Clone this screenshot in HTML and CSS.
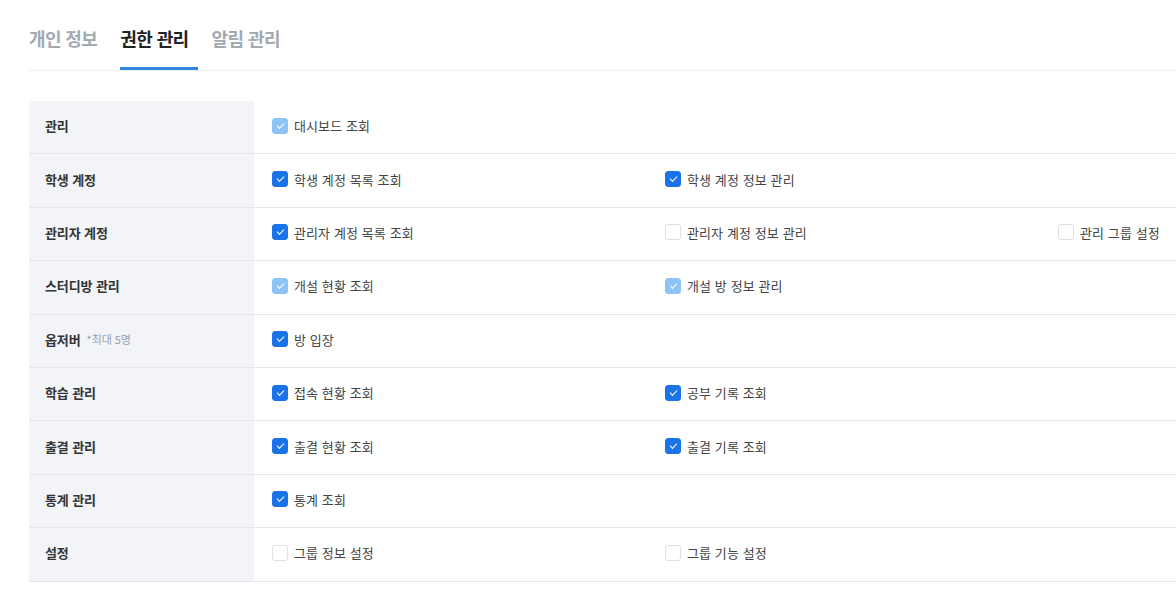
FILE: index.html
```html
<!DOCTYPE html>
<html lang="ko">
<head>
<meta charset="utf-8">
<link rel="stylesheet" href="styles.css">
</head>
<body>
<div class="page">
  <div class="tabs">
    <div class="tab">개인 정보</div>
    <div class="tab active">권한 관리</div>
    <div class="tab">알림 관리</div>
  </div>
  <div class="table">
    <div class="row">
      <div class="label">관리</div>
      <div class="opts">
        <div class="opt"><span class="cb on dis"></span>대시보드 조회</div>
      </div>
    </div>
    <div class="row">
      <div class="label">학생 계정</div>
      <div class="opts">
        <div class="opt"><span class="cb on"></span>학생 계정 목록 조회</div>
        <div class="opt"><span class="cb on"></span>학생 계정 정보 관리</div>
      </div>
    </div>
    <div class="row">
      <div class="label">관리자 계정</div>
      <div class="opts">
        <div class="opt"><span class="cb on"></span>관리자 계정 목록 조회</div>
        <div class="opt"><span class="cb"></span>관리자 계정 정보 관리</div>
        <div class="opt"><span class="cb"></span>관리 그룹 설정</div>
      </div>
    </div>
    <div class="row">
      <div class="label">스터디방 관리</div>
      <div class="opts">
        <div class="opt"><span class="cb on dis"></span>개설 현황 조회</div>
        <div class="opt"><span class="cb on dis"></span>개설 방 정보 관리</div>
      </div>
    </div>
    <div class="row">
      <div class="label">옵저버<span class="note">*최대 5명</span></div>
      <div class="opts">
        <div class="opt"><span class="cb on"></span>방 입장</div>
      </div>
    </div>
    <div class="row">
      <div class="label">학습 관리</div>
      <div class="opts">
        <div class="opt"><span class="cb on"></span>접속 현황 조회</div>
        <div class="opt"><span class="cb on"></span>공부 기록 조회</div>
      </div>
    </div>
    <div class="row">
      <div class="label">출결 관리</div>
      <div class="opts">
        <div class="opt"><span class="cb on"></span>출결 현황 조회</div>
        <div class="opt"><span class="cb on"></span>출결 기록 조회</div>
      </div>
    </div>
    <div class="row">
      <div class="label">통계 관리</div>
      <div class="opts">
        <div class="opt"><span class="cb on"></span>통계 조회</div>
      </div>
    </div>
    <div class="row">
      <div class="label">설정</div>
      <div class="opts">
        <div class="opt"><span class="cb"></span>그룹 정보 설정</div>
        <div class="opt"><span class="cb"></span>그룹 기능 설정</div>
      </div>
    </div>
  </div>
</div>
</body>
</html>
```
FILE: styles.css
```css
* { box-sizing: border-box; }
html, body { margin: 0; padding: 0; background: #fff; }
body {
  font-family: "Noto Sans CJK KR", "Noto Sans", sans-serif;
  color: #333;
  overflow: hidden;
}
.page { padding: 25px 0 0 29px; }
.tabs {
  display: flex;
  border-bottom: 1px solid #eceef1;
}
.tab {
  font-size: 18px;
  font-weight: 700;
  line-height: 26px;
  color: #a3a9b1;
  padding: 0 9px 16px 0;
  margin-right: 14px;
  border-bottom: 3px solid transparent;
  letter-spacing: -0.6px;
}
.tab.active {
  color: #222;
  border-bottom-color: #2e86de;
  padding-right: 9px;
}
.table { margin-top: 30px; }
.row {
  display: flex;
  height: 53.4px;
  border-bottom: 1px solid #e4e6e9;
}
.label {
  width: 225px;
  flex: none;
  background: #f2f4f7;
  padding: 0 0 3px 16px;
  display: flex;
  align-items: center;
  font-size: 13px;
  font-weight: 700;
  color: #333;
  letter-spacing: -0.1px;
}
.note {
  font-size: 11px;
  font-weight: 400;
  color: #9aa0a8;
  margin-left: 6px;
}
.opts {
  display: flex;
  align-items: center;
  padding: 0 0 3px 18px;
  flex: 1;
  min-width: 0;
  overflow: hidden;
}
.opt {
  width: 393px;
  flex: none;
  display: flex;
  align-items: center;
  font-size: 13px;
  color: #444;
  letter-spacing: 0.1px;
}
.cb {
  width: 16px;
  height: 16px;
  border-radius: 3px;
  border: 1px solid #dcdfe3;
  background: #fff;
  margin-right: 6px;
  flex: none;
  position: relative;
}
.cb.on {
  background: #1a73e8;
  border-color: #1a73e8;
}
.cb.on.dis {
  background: #8ec3f7;
  border-color: #8ec3f7;
}
.cb.on::after {
  content: "";
  position: absolute;
  left: 4px;
  top: 4px;
  width: 6px;
  height: 3px;
  border-left: 1.8px solid #fff;
  border-bottom: 1.8px solid #fff;
  transform: rotate(-45deg);
}
```
